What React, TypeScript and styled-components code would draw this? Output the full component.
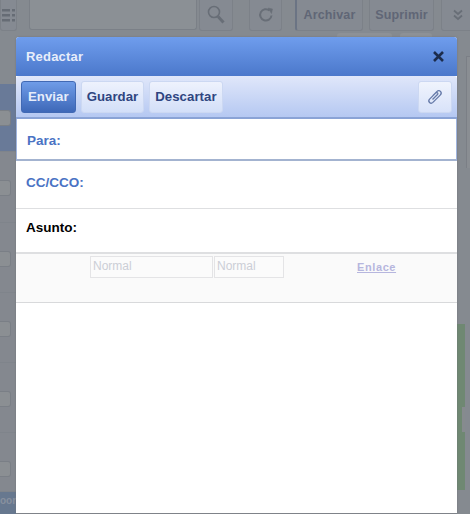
import { FunctionComponent } from 'react'
import styled, { createGlobalStyle } from 'styled-components'

const GlobalStyle = createGlobalStyle`
  html, body {
    margin: 0;
    padding: 0;
    background: #858a90;
  }
  body {
    font-family: "Liberation Sans", Arial, sans-serif;
  }
`

const Screen = styled.div`
  position: relative;
  width: 470px;
  height: 514px;
  overflow: hidden;
  background: #858a90;
`

const TopBar = styled.div`
  display: flex;
  align-items: flex-start;
  height: 31px;
  gap: 2px;
  color: #666c75;
`

const BackButton = styled.div<{ $w: number; $ml?: number; $current?: boolean }>`
  display: flex;
  align-items: center;
  justify-content: center;
  box-sizing: border-box;
  flex-shrink: 0;
  width: ${p => p.$w}px;
  margin-left: ${p => p.$ml ?? 0}px;
  height: 31px;
  border: 1px solid #7c8188;
  border-left: ${p => (p.$current ? '2px solid #6b7484' : '1px solid #7c8188')};
  border-top: 0;
  border-radius: 0 0 3px 3px;
  background: #858a92;
  font-size: 12.5px;
  font-weight: bold;
  letter-spacing: 0.15px;
  color: #606676;
`

const SearchBox = styled.div`
  box-sizing: border-box;
  flex-shrink: 0;
  width: 168px;
  height: 30px;
  margin-left: 10px;
  border: 1px solid #7b8087;
  border-top: 0;
  border-radius: 0 0 3px 3px;
  background: #8b9095;
`

const SubTabs = styled.div`
  display: flex;
  gap: 8px;
  margin-top: 2px;
  padding-left: 337px;
`

const SubTab = styled.div<{ $w: number }>`
  width: ${p => p.$w}px;
  height: 4px;
  border-radius: 3px 3px 0 0;
  background: #8d9196;
`

const Sidebar = styled.div`
  position: absolute;
  left: 0;
  top: 82px;
  bottom: 0;
  width: 16px;
  display: flex;
  flex-direction: column;
`

const SideRow = styled.div<{ $selected?: boolean; $h?: number }>`
  height: ${p => p.$h ?? 70.3}px;
  box-sizing: border-box;
  padding-top: 26px;
  border-top: 2px solid ${p => (p.$selected ? '#858a90' : 'transparent')};
  border-bottom: 1px solid #7f848b;
  background: ${p => (p.$selected ? '#697a98' : '#84888f')};
`

const SideCheck = styled.div`
  width: 11px;
  height: 16px;
  box-sizing: border-box;
  border: 1px solid #7a7f86;
  border-left: 0;
  border-radius: 0 3px 3px 0;
  background: #8b8f93;
`

const SideFooter = styled.div`
  flex: 1;
  background: #67788f;
  color: #87909e;
  font-size: 10px;
  font-weight: bold;
  line-height: 18px;
  text-align: right;
  overflow: hidden;
`

const RightPanel = styled.div`
  position: absolute;
  left: 466px;
  top: 56px;
  width: 4px;
  height: 112px;
  box-sizing: border-box;
  border-left: 1px solid #7b7f86;
  border-top: 1px solid #7b7f86;
  background: #8a8e93;
`

const GreenRail = styled.div`
  position: absolute;
  left: 457px;
  top: 324px;
  width: 8px;
  height: 166px;
  background: #6f8872;
`

const RailMark = styled.div`
  position: absolute;
  right: 0;
  top: 83px;
  width: 3px;
  height: 25px;
  background: #868b8e;
`

const Modal = styled.div`
  position: absolute;
  left: 16px;
  top: 37px;
  width: 441px;
  height: 476px;
  display: flex;
  flex-direction: column;
  background: #fff;
  border-radius: 3px 3px 0 0;
  box-shadow: 0 0 2px #6e7278;
`

const Header = styled.div`
  display: flex;
  align-items: center;
  justify-content: space-between;
  box-sizing: border-box;
  height: 39px;
  padding: 0 13px 0 10px;
  background: linear-gradient(#6f9ded, #4b78cb);
  border-radius: 3px 3px 0 0;
  color: #e8eefa;
  font-size: 13px;
  font-weight: bold;
  letter-spacing: 0.2px;
`

const CloseGlyph = styled.svg`
  width: 11px;
  height: 11px;
  display: block;
`

const Toolbar = styled.div`
  display: flex;
  align-items: center;
  gap: 5px;
  box-sizing: border-box;
  height: 43px;
  padding: 0 5px;
  background: linear-gradient(#e0e7fa, #b5c8f2);
  border-top-right-radius: 3px;
  border-top-left-radius: 3px;
  border-bottom: 2px solid #8aa3d6;
`

const ToolButton = styled.button<{ $primary?: boolean }>`
  box-sizing: border-box;
  height: 32px;
  padding: 0 ${p => (p.$primary ? 6 : 5)}px;
  border: 1px solid ${p => (p.$primary ? '#4169b4' : '#ccd8f2')};
  border-radius: 3px;
  background: ${p =>
    p.$primary
      ? 'linear-gradient(#6f9ce8, #3e68b8)'
      : 'linear-gradient(#eef2fd, #d3dff8)'};
  color: ${p => (p.$primary ? '#e6edfa' : '#2f4580')};
  font-family: inherit;
  font-size: 13.2px;
  font-weight: bold;
  letter-spacing: 0.05px;
`

const AttachButton = styled.button`
  display: flex;
  align-items: center;
  justify-content: center;
  box-sizing: border-box;
  width: 34px;
  height: 32px;
  padding: 0;
  margin-left: auto;
  border: 1px solid #ccd8f2;
  border-radius: 3px;
  background: linear-gradient(#f0f4fd, #d8e2f9);
`

const Field = styled.div<{ $h: number; $accent?: boolean; $pb: number; $pt?: number }>`
  display: flex;
  align-items: center;
  box-sizing: border-box;
  height: ${p => p.$h}px;
  padding: ${p => p.$pt ?? 0}px 10px ${p => p.$pb}px;
  border-bottom: 1px solid ${p => (p.$accent ? '#a3b3d0' : '#dedfe1')};
  ${p => p.$accent && 'border-bottom-width: 2px; border-left: 1px solid #9fb4de; border-right: 1px solid #9fb4de;'}
`

const FieldLabel = styled.span<{ $dark?: boolean }>`
  font-size: 13.5px;
  font-weight: bold;
  color: ${p => (p.$dark ? '#000' : '#4a73c4')};
`

const FormatBar = styled.div`
  display: flex;
  align-items: flex-start;
  box-sizing: border-box;
  height: 50px;
  padding: 2px 0 0 74px;
  background: #fafafa;
  border-top: 1px solid #dedfe1;
  border-bottom: 1px solid #d8d9db;
`

const FormatSelect = styled.div<{ $w: number }>`
  box-sizing: border-box;
  width: ${p => p.$w}px;
  height: 22px;
  margin-right: 1px;
  padding: 0 2px;
  border: 1px solid #e4e4e6;
  background: #fbfbfb;
  color: #cbced6;
  font-size: 12px;
  line-height: 19px;
`

const LinkLabel = styled.a`
  margin: 4px 0 0 72px;
  color: #b6b6de;
  font-size: 11px;
  font-weight: bold;
  letter-spacing: 0.6px;
  line-height: 15px;
  text-decoration: underline;
`

const Editor = styled.div`
  flex: 1;
  background: #fff;
`

const App: FunctionComponent = () => {
  return (
    <>
      <GlobalStyle />
      <Screen>
        <TopBar>
          <BackButton $w={17}>
            <svg width="14" height="16" viewBox="0 0 14 16" fill="#666c75">
              <rect x="0" y="2" width="8" height="2.5" />
              <rect x="10" y="2" width="3" height="2.5" />
              <rect x="0" y="7" width="8" height="2.5" />
              <rect x="10" y="7" width="3" height="2.5" />
              <rect x="0" y="12" width="8" height="2.5" />
              <rect x="10" y="12" width="3" height="2.5" />
            </svg>
          </BackButton>
          <SearchBox />
          <BackButton $w={34}>
            <svg width="18" height="20" viewBox="0 0 18 20" fill="none" stroke="#686e77">
              <circle cx="7" cy="7" r="5.5" strokeWidth="1.6" />
              <path d="M11 11.5 L16.5 17.5" strokeWidth="3" />
            </svg>
          </BackButton>
          <BackButton $w={33} $ml={14}>
            <svg width="16" height="16" viewBox="0 0 16 16" fill="none" stroke="#686e77" strokeWidth="2">
              <path d="M13.5 8.5 A5.7 5.7 0 1 1 11.5 3.5" />
              <path d="M10 1 L14.5 2 L13.5 6.5 Z" fill="#686e77" strokeWidth="0.5" />
            </svg>
          </BackButton>
          <BackButton $w={68} $ml={11} $current>Archivar</BackButton>
          <BackButton $w={65} $ml={4}>Suprimir</BackButton>
          <BackButton $w={33} $ml={5}>
            <svg width="10" height="12" viewBox="0 0 10 12" fill="none" stroke="#686e77" strokeWidth="1.8">
              <path d="M1 1.5 L5 5 L9 1.5" />
              <path d="M1 6.5 L5 10 L9 6.5" />
            </svg>
          </BackButton>
        </TopBar>
        <SubTabs>
          <SubTab $w={55} />
          <SubTab $w={32} />
        </SubTabs>

        <Sidebar>
          <SideRow $selected><SideCheck /></SideRow>
          <SideRow><SideCheck /></SideRow>
          <SideRow><SideCheck /></SideRow>
          <SideRow><SideCheck /></SideRow>
          <SideRow><SideCheck /></SideRow>
          <SideRow $h={58.5}><SideCheck /></SideRow>
          <SideFooter>oor</SideFooter>
        </Sidebar>
        <RightPanel />
        <GreenRail><RailMark /></GreenRail>

        <Modal>
          <Header>
            Redactar
            <CloseGlyph viewBox="0 0 11 11" stroke="#1c2c4c" strokeWidth="2.6">
              <path d="M1 1 L10 10 M10 1 L1 10" />
            </CloseGlyph>
          </Header>
          <Toolbar>
            <ToolButton $primary>Enviar</ToolButton>
            <ToolButton>Guardar</ToolButton>
            <ToolButton>Descartar</ToolButton>
            <AttachButton>
              <svg width="18" height="18" viewBox="0 0 18 18" fill="none" stroke="#6479a8" strokeWidth="1.3">
                <path d="M6.5 11.5 L11.5 6.5 C12.6 5.4 11 3.8 9.8 4.9 L3.6 11.1 C1.4 13.4 4.6 16.6 6.9 14.4 L14.2 7.1 C16.8 4.4 13.4 1 10.8 3.6 L6.8 7.6" />
              </svg>
            </AttachButton>
          </Toolbar>
          <Field $h={42} $accent $pt={2} $pb={0}><FieldLabel>Para:</FieldLabel></Field>
          <Field $h={48} $pb={4}><FieldLabel>CC/CCO:</FieldLabel></Field>
          <Field $h={44} $pb={6}><FieldLabel $dark>Asunto:</FieldLabel></Field>
          <FormatBar>
            <FormatSelect $w={123}>Normal</FormatSelect>
            <FormatSelect $w={70}>Normal</FormatSelect>
            <LinkLabel>Enlace</LinkLabel>
          </FormatBar>
          <Editor />
        </Modal>
      </Screen>
    </>
  )
}

export default App
